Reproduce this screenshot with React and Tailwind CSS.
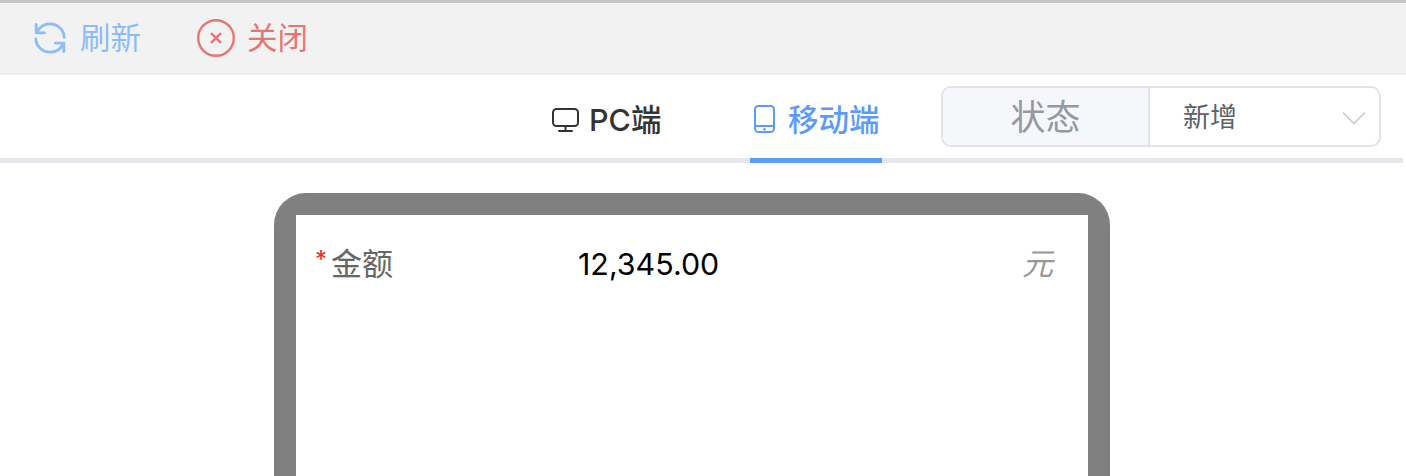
const FONT = "font-['Inter','Noto_Sans_CJK_SC',sans-serif]";

const RefreshIcon = () => (
  <svg width="34" height="34" viewBox="0 0 34 34" fill="none" stroke="#8cbcfb" strokeWidth="2.8" strokeLinecap="round" strokeLinejoin="round">
    <path d="M4 11.5C6.4 6 11 2.8 17 2.8c7.6 0 14 6 14.2 13.6" />
    <path d="M3.2 3.5v8.3h8.3" />
    <path d="M30.4 22.4C28 28 23 31.2 17 31.2c-7.6 0-14-6-14.2-13.6" />
    <path d="M30.8 30.5v-8.3h-8.3" />
  </svg>
);

const CloseIcon = () => (
  <svg width="38" height="38" viewBox="0 0 38 38" fill="none" stroke="#e87575" strokeLinecap="round">
    <circle cx="19" cy="19" r="17.8" strokeWidth="2.4" />
    <path d="M14.8 14.8l8.4 8.4M23.2 14.8l-8.4 8.4" strokeWidth="2.6" />
  </svg>
);

const MonitorIcon = () => (
  <svg className="shrink-0" width="28" height="24" viewBox="0 0 28 24" fill="none" stroke="#333333" strokeWidth="2" strokeLinecap="round" strokeLinejoin="round">
    <rect x="1" y="1" width="25" height="17" rx="3.5" />
    <path d="M13.5 18v5M7 23h13" />
  </svg>
);

const TabletIcon = () => (
  <svg className="shrink-0" width="24" height="30" viewBox="0 0 24 30" fill="none" stroke="#5a9cf8" strokeWidth="2">
    <rect x="3" y="1" width="19" height="26" rx="3.5" />
    <path d="M3 21h19" />
    <circle cx="12.5" cy="24.2" r="1.3" fill="#5a9cf8" stroke="none" />
  </svg>
);

export default function App() {
  return (
    <div className={`${FONT} h-[476px] w-[1406px] overflow-hidden bg-white`}>
      <div className="flex h-[75px] items-center border-t-[3px] border-b-2 border-t-[#c6c6c6] border-b-[#efecee] bg-[#f2f2f2] pl-[33px]">
        <div className="flex items-center gap-[13px] text-[30.5px] leading-none text-[#8cbcfb]">
          <RefreshIcon />
          <span>刷新</span>
        </div>
        <div className="ml-[56px] flex items-center gap-[12px] text-[30.5px] leading-none text-[#e87575]">
          <CloseIcon />
          <span>关闭</span>
        </div>
      </div>

      <div className="flex h-[88px] w-[1403px] border-b-[5px] border-[#e4e7eb]">
        <div className="ml-[552px] flex h-[88px] w-[110px] items-center gap-[9px] pt-[2px] text-[30.5px] font-medium whitespace-nowrap text-[#333333]">
          <MonitorIcon />
          <span>PC端</span>
        </div>
        <div className="ml-[88px] flex h-[88px] w-[132px] items-center gap-[12px] border-b-[5px] border-[#5a9cf8] pt-[7px] pl-[2px] text-[30.5px] font-medium whitespace-nowrap text-[#5a9cf8]">
          <TabletIcon />
          <span>移动端</span>
        </div>
        <div className="mt-[11px] ml-[59px] flex h-[61px] w-[440px] rounded-[10px] border-2 border-[#e2e3e9] text-[#96999f]">
          <div className="flex w-[207px] items-center justify-center rounded-l-[8px] border-r-2 border-[#e2e3e9] bg-[#f5f7fa] pt-[2px] text-[35px]">
            状态
          </div>
          <div className="flex flex-1 items-center justify-between pt-[2px] pr-[13px] pl-[33px]">
            <span className="mt-[2px] text-[27px] text-[#606266]">新增</span>
            <svg width="24" height="14" viewBox="0 0 24 14" fill="none" stroke="#c9ccd2" strokeWidth="1.6">
              <path d="M1 1.5l11 11 11-11" />
            </svg>
          </div>
        </div>
      </div>

      <div className="mt-[30px] ml-[274px] h-[400px] w-[836px] rounded-t-[32px] bg-[#808080] px-[22px] pt-[22px]">
        <div className="flex h-full items-start bg-white pt-[26px] pr-[35px] pl-[19px]">
          <span className="mt-[7px] w-[12px] text-[24px] leading-none text-[#e02b2b]">*</span>
          <span className="ml-[4px] w-[247px] text-[31px] leading-[46px] text-[#666666]">金额</span>
          <span className="text-[30.4px] leading-[46px] text-black">12,345.00</span>
          <span className="ml-auto text-[31px] leading-[46px] text-[#999999] italic">元</span>
        </div>
      </div>
    </div>
  );
}
